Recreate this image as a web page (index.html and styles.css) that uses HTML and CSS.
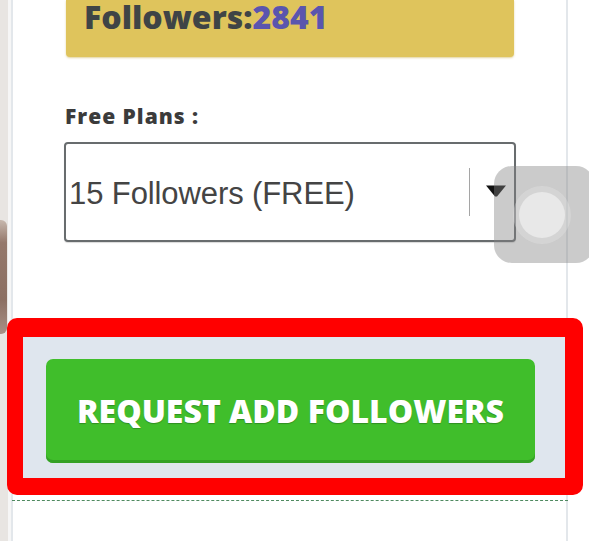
FILE: index.html
```html
<!DOCTYPE html>
<html lang="en">
<head>
<meta charset="utf-8">
<title>Free Followers</title>
<link rel="stylesheet" href="styles.css">
</head>
<body>
<div class="screen">
  <div class="edge"><div class="finger"></div></div>
  <div class="panel">
    <div class="stat">Followers:<span class="count">2841</span></div>
    <div class="label">Free Plans :</div>
    <div class="select">
      <span class="value">15 Followers (FREE)</span>
      <span class="sep"></span>
      <svg class="arrow" width="20" height="12" viewBox="0 0 20 12"><path d="M0 0.5 H20 L11 11.5 H9 Z" fill="#111"/></svg>
    </div>
    <div class="highlight">
      <div class="highlight-inner">
        <button class="request">REQUEST ADD FOLLOWERS</button>
      </div>
    </div>
    <div class="dashed"></div>
  </div>
  <div class="touch"><div class="touch-dot"></div></div>
</div>
</body>
</html>
```

FILE: styles.css
```css
* { box-sizing: border-box; }
html, body { margin: 0; padding: 0; background: #fff; }
.screen {
  position: relative;
  width: 589px;
  height: 541px;
  overflow: hidden;
  display: flex;
  background: #fff;
}
.edge {
  position: relative;
  width: 11px;
  flex: none;
  background: linear-gradient(to right, #e8e5e2 0, #e8e5e2 8px, #f6f6f6 8px, #f6f6f6 11px);
}
.finger {
  position: absolute;
  left: 0;
  top: 220px;
  width: 7px;
  height: 114px;
  border-radius: 0 6px 6px 0;
  background: linear-gradient(to bottom, #c7b8ae 0, #94786b 20%, #8c6f62 70%, #a89086 100%);
}
.panel {
  width: 557px;
  flex: none;
  border-left: 2px solid #e3e7eb;
  border-right: 2px solid #e3e7eb;
  display: flex;
  flex-direction: column;
  align-items: flex-start;
}
.stat {
  margin: 0 0 0 53px;
  width: 448px;
  height: 57px;
  padding: 0 0 0 18px;
  background: #dfc45c;
  border-radius: 0 0 4px 4px;
  box-shadow: 0 1px 2px rgba(200, 170, 60, 0.5);
  font-family: "Open Sans", sans-serif;
  font-weight: 800;
  font-size: 32px;
  line-height: 34px;
  color: #3f4446;
}
.count { color: #5a55ae; }
.label {
  margin: 47px 0 0 52px;
  font-family: "Open Sans", sans-serif;
  font-weight: 800;
  font-size: 21px;
  letter-spacing: 1px;
  line-height: 24px;
  color: #3b3b3b;
}
.select {
  margin: 14px 0 0 51px;
  width: 452px;
  height: 100px;
  border: 2px solid #686c6e;
  border-radius: 4px;
  display: flex;
  align-items: center;
  padding: 3px 0 0 3px;
  background: #fff;
  box-shadow: 0 1px 1px rgba(0,0,0,0.15);
}
.value {
  font-family: "Liberation Sans", Arial, sans-serif;
  font-size: 31px;
  color: #444;
  flex: 1;
  letter-spacing: -0.1px;
}
.sep {
  width: 1px;
  height: 48px;
  background: #a5a5a5;
  margin-right: 16px;
  margin-top: -3px;
}
.arrow {
  margin-right: 8px;
  margin-top: -5px;
}
.highlight {
  margin: 76px 0 0 -6px;
  width: 576px;
  height: 177px;
  border-style: solid;
  border-color: #ff0000;
  border-width: 19px 18px 17px 16px;
  border-radius: 10px;
  background: #dfe6ee;
  position: relative;
  z-index: 1;
}
.highlight-inner {
  width: 100%;
  height: 100%;
  padding: 22px 30px 15px 23px;
}
.request {
  display: block;
  width: 100%;
  height: 100%;
  border: none;
  border-radius: 7px;
  background: #40be2b;
  box-shadow: inset 0 -3px 0 #34a125;
  color: #fff;
  font-family: "Open Sans", sans-serif;
  font-weight: 800;
  font-size: 32px;
  padding: 0 0 2px;
  text-shadow: 0 1px 1px rgba(0,0,0,0.25);
  cursor: pointer;
}
.dashed {
  margin: 5px 0 0 -1px;
  width: 556px;
  border-top: 1px dashed #4f8a60;
}
.touch {
  position: absolute;
  left: 494px;
  top: 166px;
  width: 100px;
  height: 97px;
  border-radius: 18px;
  background: rgba(130, 130, 130, 0.42);
  display: flex;
  align-items: center;
  justify-content: center;
  padding-right: 4px;
  z-index: 2;
}
.touch-dot {
  width: 46px;
  height: 46px;
  border-radius: 50%;
  background: #e8e8e8;
  box-shadow: 0 0 0 6px rgba(235, 235, 235, 0.3);
}
```
